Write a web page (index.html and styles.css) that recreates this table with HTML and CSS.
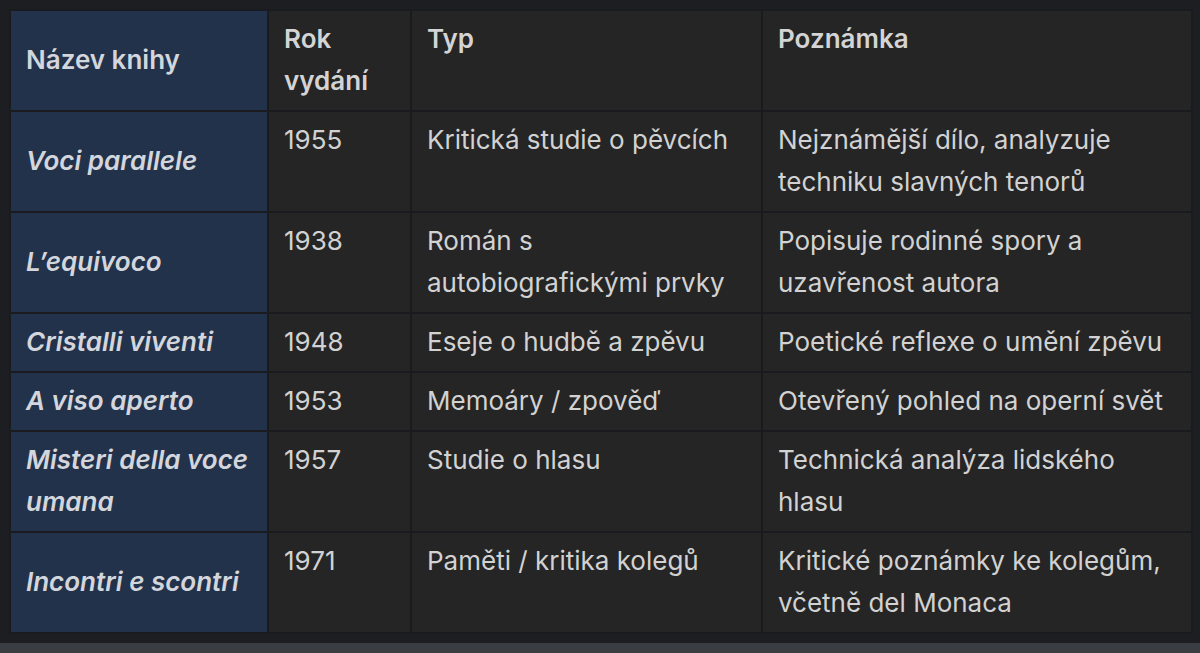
FILE: index.html
```html
<!DOCTYPE html>
<html lang="cs">
<head>
<meta charset="utf-8">
<link rel="stylesheet" href="styles.css">
</head>
<body>
<div class="wrap">
<table class="books">
  <colgroup>
    <col class="c1"><col class="c2"><col class="c3"><col class="c4">
  </colgroup>
  <thead>
    <tr>
      <th class="title">Název knihy</th>
      <th>Rok vydání</th>
      <th>Typ</th>
      <th>Poznámka</th>
    </tr>
  </thead>
  <tbody>
    <tr>
      <td class="title">Voci parallele</td>
      <td>1955</td>
      <td>Kritická studie o pěvcích</td>
      <td>Nejznámější dílo, analyzuje techniku slavných tenorů</td>
    </tr>
    <tr>
      <td class="title">L’equivoco</td>
      <td>1938</td>
      <td>Román s autobiografickými prvky</td>
      <td>Popisuje rodinné spory a uzavřenost autora</td>
    </tr>
    <tr>
      <td class="title">Cristalli viventi</td>
      <td>1948</td>
      <td>Eseje o hudbě a zpěvu</td>
      <td>Poetické reflexe o umění zpěvu</td>
    </tr>
    <tr>
      <td class="title">A viso aperto</td>
      <td>1953</td>
      <td>Memoáry / zpověď</td>
      <td>Otevřený pohled na operní svět</td>
    </tr>
    <tr>
      <td class="title">Misteri della voce umana</td>
      <td>1957</td>
      <td>Studie o hlasu</td>
      <td>Technická analýza lidského hlasu</td>
    </tr>
    <tr>
      <td class="title">Incontri e scontri</td>
      <td>1971</td>
      <td>Paměti / kritika kolegů</td>
      <td>Kritické poznámky ke kolegům, včetně del Monaca</td>
    </tr>
  </tbody>
</table>
</div>
<div class="bottombar"></div>
</body>
</html>
```

FILE: styles.css
```css
html, body {
  margin: 0;
  padding: 0;
  background: #1d1e22;
  height: 100%;
  overflow: hidden;
}
body {
  font-family: Inter, "Noto Sans", sans-serif;
  color: #d2d2d2;
}
.wrap {
  padding: 9px 10px 0 9px;
  height: 633px;
  box-sizing: border-box;
}
.books {
  border-collapse: collapse;
  table-layout: fixed;
  width: 1182px;
  font-size: 26px;
  line-height: 42px;
}
.c1 { width: 258px; }
.c2 { width: 143px; }
.c3 { width: 351px; }
.c4 { width: 430px; }
.books th,
.books td {
  border: 2px solid #1a1b1e;
  background: #252525;
  padding: 7px 14px 8px 15px;
  text-align: left;
  vertical-align: top;
  font-weight: 400;
}
.books th {
  font-weight: 600;
  color: #d4d4d4;
}
.books .title {
  background: #23324b;
  vertical-align: middle;
  font-weight: 600;
  color: #d3d6dc;
}
.books td.title {
  font-style: italic;
}
.bottombar {
  height: 10px;
  background: #3a3e43;
  margin-top: 10px;
}
```
